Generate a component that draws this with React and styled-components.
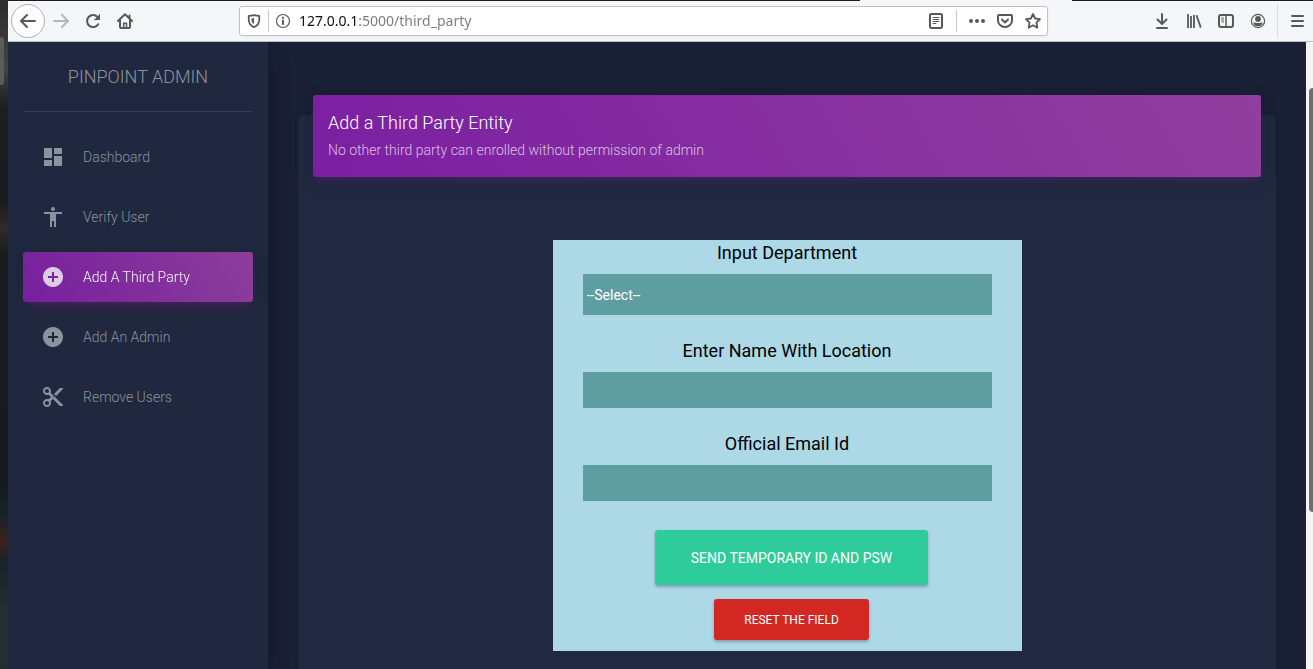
import React from "react";
import styled, { createGlobalStyle, css } from "styled-components";
import {
  MdDashboard,
  MdAccessibility,
  MdAddCircle,
  MdContentCut,
} from "react-icons/md";

const GlobalStyle = createGlobalStyle`
  *, *::before, *::after { box-sizing: border-box; }
  body {
    margin: 0;
    background: #1a2035;
    font-family: Roboto, "Liberation Sans", sans-serif;
    font-size: 14px;
    font-weight: 300;
  }
  button, input, select { font: inherit; margin: 0; }
`;

/* ---------- desktop and browser window ---------- */

const Desktop = styled.div`
  display: grid;
  grid-template-columns: 8px minmax(0, 1fr);
  height: 100vh;
  overflow: hidden;
`;

const Wallpaper = styled.div`
  padding-top: 37px;
  background: linear-gradient(
    #2e2b2b 0%, #454242 10%, #1d1e1e 16%, #171b1b 30%, #332a26 34%,
    #171c1b 38%, #151b1b 72%, #16232a 77%, #3a211c 81%, #18242a 84%,
    #262e2f 92%, #232d2d 100%
  );
`;

const DockHandle = styled.div`
  width: 4px;
  height: 48px;
  border-radius: 0 3px 3px 0;
  background: #5b5b5b;
`;

const Browser = styled.div`
  display: flex;
  flex-direction: column;
  min-width: 0;
  height: 100vh;
`;

const TabStrip = styled.div`
  display: grid;
  grid-template-columns: 852fr 212fr 241fr;
  flex: none;
  height: 1px;
  background: #1c1b22;
`;

const ActiveTab = styled.div`
  grid-column: 2;
  background: #f5f6f7;
`;

const Toolbar = styled.header`
  display: flex;
  align-items: center;
  flex: none;
  height: 41px;
  padding-left: 3px;
  background: #f5f6f7;
  border-bottom: 1px solid #b9bfc4;
`;

const ToolButton = styled.button`
  display: flex;
  align-items: center;
  justify-content: center;
  flex: none;
  width: 32px;
  height: 32px;
  padding: 0;
  border: 0;
  background: transparent;
  color: #58585a;
  opacity: ${(p) => (p.disabled ? 0.4 : 1)};
`;

const BackButton = styled(ToolButton)`
  width: 34px;
  height: 34px;
  border: 1px solid #b0b0b2;
  border-radius: 50%;
  background: #fdfdfd;
`;

const ToolDivider = styled.span`
  flex: none;
  width: 1px;
  height: 34px;
  margin: 0 3px;
  background: #d8dadc;
`;

const AddressBar = styled.form`
  display: flex;
  align-items: center;
  flex: 1;
  min-width: 0;
  height: 30px;
  margin: 0 98px;
  border: 1px solid #bec4ca;
  border-radius: 3px;
  background: #fff;
  box-shadow: 0 1px 3px rgba(0, 0, 0, 0.05);
`;

const AddressButton = styled(ToolButton)`
  width: 28px;
  height: 28px;
`;

const AddressDivider = styled.span`
  flex: none;
  width: 1px;
  height: 22px;
  background: #c3c8cd;
  margin-right: ${(p) => p.$after || 0}px;
  margin-left: ${(p) => p.$before || 0}px;
`;

const AddressInput = styled.input`
  flex: 1;
  min-width: 0;
  padding: 0 2px;
  border: 0;
  outline: 0;
  font-family: "Noto Sans", "Open Sans", sans-serif;
  font-size: 14px;
  font-weight: 400;
  line-height: 20px;
  color: transparent;
  background: linear-gradient(to right, #0c0c0d 61px, #7a7a7c 61px);
  background-clip: text;
  -webkit-background-clip: text;
`;

const Viewport = styled.div`
  display: grid;
  grid-template-columns: 260px minmax(0, 1fr) 7px;
  flex: 1;
  min-height: 0;
`;

const ScrollTrack = styled.div`
  display: grid;
  grid-template-rows: 46fr 424fr 157fr;
  padding-left: 3px;
  background: #f4f4f4;
`;

const ScrollThumb = styled.div`
  grid-row: 2;
  border-radius: 4px 0 0 4px;
  background: #6e6e6e;
`;

/* ---------- sidebar ---------- */

const Sidebar = styled.aside`
  position: relative;
  z-index: 1;
  padding: 0 15px;
  background: #1f283e;
  box-shadow: 0 10px 30px -12px rgba(0, 0, 0, 0.42),
    0 4px 25px 0 rgba(0, 0, 0, 0.12), 0 8px 10px -5px rgba(0, 0, 0, 0.2);
  clip-path: inset(0 -40px 0 0);
`;

const Brand = styled.a`
  display: block;
  padding: 20px 0 19px;
  border-bottom: 1px solid #343c4f;
  color: #8b939f;
  font-size: 18px;
  line-height: 30px;
  text-align: center;
  text-decoration: none;
`;

const NavList = styled.nav`
  display: flex;
  flex-direction: column;
  gap: 10px;
  padding-top: 20px;
`;

const NavLink = styled.a`
  display: flex;
  align-items: center;
  gap: 18px;
  height: 50px;
  padding: 0 18px;
  border-radius: 3px;
  color: #8b939f;
  text-decoration: none;

  svg {
    flex: none;
    width: 24px;
    height: 24px;
  }

  ${(p) =>
    p.$active &&
    css`
      color: #fff;
      background: linear-gradient(60deg, #7b1fa2, #913f9e);
      box-shadow: 0 4px 20px 0 rgba(0, 0, 0, 0.14),
        0 7px 12px -5px rgba(156, 39, 176, 0.46);
      opacity: 0.96;

      svg {
        opacity: 0.8;
      }
    `}
`;

/* ---------- main panel ---------- */

const Main = styled.main`
  display: flex;
  min-width: 0;
  padding: 73px 30px 0;
  overflow: hidden;
  background: #1a2035;
`;

const Card = styled.section`
  flex: 1;
  min-width: 0;
  padding: 0 15px;
  border-radius: 6px 6px 0 0;
  background: #202940;
  box-shadow: 0 1px 4px 0 rgba(0, 0, 0, 0.14);
`;

const CardHeader = styled.div`
  display: flex;
  flex-direction: column;
  gap: 4px;
  margin-top: -20px;
  padding: 15px 15px 17px;
  border-radius: 3px;
  background: linear-gradient(60deg, #7b1fa2, #913f9e);
  box-shadow: 0 4px 20px 0 rgba(0, 0, 0, 0.14),
    0 7px 10px -5px rgba(156, 39, 176, 0.4);
`;

const CardTitle = styled.h4`
  margin: 0;
  color: #fff;
  font-size: 18px;
  font-weight: 300;
  line-height: 26px;
`;

const CardCategory = styled.p`
  margin: 0;
  color: rgba(255, 255, 255, 0.72);
  line-height: 20px;
`;

const EntityForm = styled.form`
  width: 100%;
  max-width: 469px;
  margin: 63px auto 0;
  padding: 0 30px 11px;
  background: #add8e6;
  font-weight: 400;
`;

const Field = styled.div`
  display: flex;
  flex-direction: column;
  gap: 8px;
  margin-bottom: 23px;
`;

const FieldLabel = styled.label`
  color: #000;
  font-size: 18px;
  line-height: 26px;
  text-align: center;
`;

const control = css`
  width: 100%;
  border: 0;
  border-radius: 0;
  outline: 0;
  color: #fff;
  background: #5f9ea0;
`;

const TextInput = styled.input`
  ${control}
  height: 36px;
  padding: 0 4px;
`;

const SelectInput = styled.select`
  ${control}
  height: 41px;
  padding: 0 4px;
  appearance: none;
`;

const Actions = styled.div`
  display: flex;
  flex-direction: column;
  align-items: center;
  gap: 14px;
  padding: 6px 0 0 9px;
`;

const ActionButton = styled.button`
  height: ${(p) => (p.$large ? 55 : 41)}px;
  padding: 0 ${(p) => (p.$large ? 36 : 30)}px;
  border: 0;
  border-radius: 3px;
  color: #fff;
  background: ${(p) => (p.$large ? "#2ecc9a" : "#d32723")};
  box-shadow: 0 2px 3px rgba(60, 50, 90, 0.35);
  font-size: ${(p) => (p.$large ? 14 : 12)}px;
  text-transform: uppercase;
`;

/* ---------- browser icons ---------- */

const Glyph = ({ children, size = 16, width = 2 }) => (
  <svg
    width={size}
    height={size}
    viewBox="0 0 16 16"
    fill="none"
    stroke="currentColor"
    strokeWidth={width}
    strokeLinecap="round"
    strokeLinejoin="round"
    aria-hidden="true"
  >
    {children}
  </svg>
);

const ArrowLeft = () => (
  <Glyph><path d="M15 8H1.5M7 2L1 8l6 6" /></Glyph>
);
const ArrowRight = () => (
  <Glyph><path d="M1 8h13.5M9 2l6 6-6 6" /></Glyph>
);
const Reload = () => (
  <Glyph>
    <path d="M13.2 11.2A6 6 0 1 1 12.5 4" />
    <path d="M15 1v6H9z" fill="currentColor" stroke="none" />
    <path d="M14.5 1.5v5H9.8" strokeWidth="1" />
  </Glyph>
);
const Home = () => (
  <Glyph>
    <path d="M1 8l7-6.8L15 8" />
    <path d="M3 7.5V14a1 1 0 0 0 1 1h8a1 1 0 0 0 1-1V7.5M12.5 5V2.5" />
    <path d="M6.7 14.5v-4.2h2.8v4.2" strokeWidth="1.5" />
  </Glyph>
);
const Shield = () => (
  <Glyph size={14}>
    <path d="M8 1.2c2 .7 4 .9 6 1v4.3c0 4-2 6.8-6 8.5-4-1.7-6-4.5-6-8.5V2.2c2-.1 4-.3 6-1z" />
    <path d="M8 4.5v7c-2-1.2-2.8-2.8-2.8-5V5z" fill="currentColor" stroke="none" />
  </Glyph>
);
const Info = () => (
  <Glyph width={1.2}>
    <circle cx="8" cy="8" r="6.5" />
    <path d="M8 7.5v3.5" strokeWidth="2" />
    <circle cx="8" cy="4.8" r="1.1" fill="currentColor" stroke="none" />
  </Glyph>
);
const Reader = () => (
  <Glyph>
    <rect x="2" y="1" width="12" height="14" rx="1.5" />
    <path d="M5 4.5h6M5 6.5h6M5 8.5h6M5 10.5h3" strokeWidth="1" />
  </Glyph>
);
const Dots = () => (
  <Glyph>
    <g fill="currentColor" stroke="none">
      <circle cx="2" cy="8" r="2" />
      <circle cx="8" cy="8" r="2" />
      <circle cx="14" cy="8" r="2" />
    </g>
  </Glyph>
);
const Pocket = () => (
  <Glyph>
    <path d="M2 2h12a1 1 0 0 1 1 1v4.5a7 6.5 0 0 1-14 0V3a1 1 0 0 1 1-1z" />
    <path d="M5 6.5l3 3 3-3" />
  </Glyph>
);
const Star = () => (
  <Glyph width={1.8}>
    <path d="M8 1l2.1 4.5 4.9.7-3.5 3.5.8 5L8 12.3l-4.3 2.4.8-5L1 6.2l4.9-.7z" />
  </Glyph>
);
const Download = () => (
  <Glyph><path d="M8 1v9.5M3.5 6.5L8 11l4.500-4.500M3 15h10" /></Glyph>
);
const Library = () => (
  <Glyph>
    <g strokeLinecap="butt">
      <path d="M2 1v14M5 3v12M8 2v13M10.5 2.3l4.3 12.3" strokeWidth="1.8" />
    </g>
  </Glyph>
);
const SidebarIcon = () => (
  <Glyph>
    <rect x="1" y="2" width="14" height="12" rx="2" />
    <path d="M8 2v12" strokeWidth="1.5" />
    <path d="M3.5 5h2M3.5 7h2M4 9h1.5" strokeWidth="1" />
  </Glyph>
);
const Account = () => (
  <Glyph width={1.2}>
    <circle cx="8" cy="8" r="6.6" />
    <g fill="currentColor" stroke="none">
      <circle cx="8" cy="6" r="2.9" />
      <path d="M3.5 9.5c1.2-.2 2 .5 4.5.5s3.3-.7 4.5-.5c.2 2.2-2 3.8-4.5 3.8s-4.7-1.6-4.5-3.8z" />
    </g>
  </Glyph>
);
const Menu = () => (
  <Glyph><path d="M3 3h11M3 8h11M3 13h11" /></Glyph>
);

/* ---------- page ---------- */

const navItems = [
  { label: "Dashboard", Icon: MdDashboard },
  { label: "Verify User", Icon: MdAccessibility },
  { label: "Add A Third Party", Icon: MdAddCircle, active: true },
  { label: "Add An Admin", Icon: MdAddCircle },
  { label: "Remove Users", Icon: MdContentCut },
];

const browserTools = [
  { label: "Downloads", Icon: Download },
  { label: "Library", Icon: Library },
  { label: "Sidebars", Icon: SidebarIcon },
  { label: "Account", Icon: Account },
];

const BrowserToolbar = () => (
  <Toolbar>
    <BackButton type="button" aria-label="Back"><ArrowLeft /></BackButton>
    <ToolButton type="button" aria-label="Forward" disabled><ArrowRight /></ToolButton>
    <ToolButton type="button" aria-label="Reload"><Reload /></ToolButton>
    <ToolButton type="button" aria-label="Home"><Home /></ToolButton>
    <AddressBar onSubmit={(e) => e.preventDefault()}>
      <AddressButton type="button" aria-label="Tracking protection"><Shield /></AddressButton>
      <AddressDivider />
      <AddressButton type="button" aria-label="Site information"><Info /></AddressButton>
      <AddressInput aria-label="Address" defaultValue="127.0.0.1:5000/third_party" />
      <AddressButton type="button" aria-label="Reader view"><Reader /></AddressButton>
      <AddressDivider $before={6} $after={6} />
      <AddressButton type="button" aria-label="Page actions"><Dots /></AddressButton>
      <AddressButton type="button" aria-label="Save to Pocket"><Pocket /></AddressButton>
      <AddressButton type="button" aria-label="Bookmark"><Star /></AddressButton>
    </AddressBar>
    {browserTools.map(({ label, Icon }) => (
      <ToolButton key={label} type="button" aria-label={label}><Icon /></ToolButton>
    ))}
    <ToolDivider />
    <ToolButton type="button" aria-label="Menu"><Menu /></ToolButton>
  </Toolbar>
);

export default function App() {
  return (
    <Desktop>
      <GlobalStyle />
      <Wallpaper><DockHandle /></Wallpaper>
      <Browser>
        <TabStrip><ActiveTab /></TabStrip>
        <BrowserToolbar />
        <Viewport>
          <Sidebar>
            <Brand href="#home">PINPOINT ADMIN</Brand>
            <NavList>
              {navItems.map(({ label, Icon, active }) => (
                <NavLink key={label} href="#nav" $active={active}>
                  <Icon />
                  {label}
                </NavLink>
              ))}
            </NavList>
          </Sidebar>
          <Main>
            <Card>
              <CardHeader>
                <CardTitle>Add a Third Party Entity</CardTitle>
                <CardCategory>
                  No other third party can enrolled without permission of admin
                </CardCategory>
              </CardHeader>
              <EntityForm onSubmit={(e) => e.preventDefault()}>
                <Field>
                  <FieldLabel htmlFor="department">Input Department</FieldLabel>
                  <SelectInput id="department">
                    <option>--Select--</option>
                  </SelectInput>
                </Field>
                <Field>
                  <FieldLabel htmlFor="name">Enter Name With Location</FieldLabel>
                  <TextInput id="name" type="text" />
                </Field>
                <Field>
                  <FieldLabel htmlFor="email">Official Email Id</FieldLabel>
                  <TextInput id="email" type="email" />
                </Field>
                <Actions>
                  <ActionButton type="submit" $large>Send temporary id and psw</ActionButton>
                  <ActionButton type="reset">Reset the field</ActionButton>
                </Actions>
              </EntityForm>
            </Card>
          </Main>
          <ScrollTrack><ScrollThumb /></ScrollTrack>
        </Viewport>
      </Browser>
    </Desktop>
  );
}
